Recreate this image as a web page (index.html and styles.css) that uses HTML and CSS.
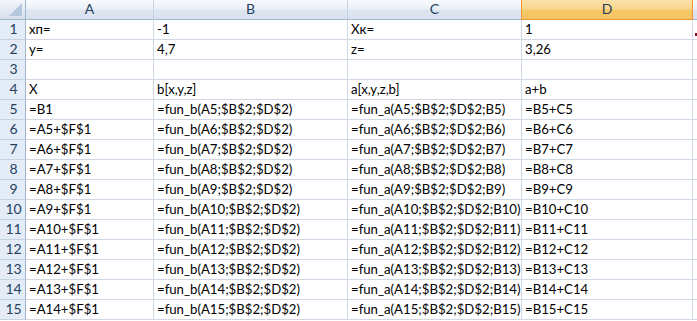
FILE: index.html
```html
<!DOCTYPE html>
<html>
<head>
<meta charset="utf-8">
<link rel="stylesheet" href="styles.css">
</head>
<body>
<div class="sheet">
  <div class="corner"><span class="tri"></span></div>
  <div class="ch">A</div>
  <div class="ch">B</div>
  <div class="ch">C</div>
  <div class="ch sel">D</div>
  <div class="ch e"></div>

  <div class="rh">1</div><div class="c">хп=</div><div class="c">-1</div><div class="c">Xк=</div><div class="c">1</div><div class="c e"><span class="mark"></span></div>
  <div class="rh">2</div><div class="c">y=</div><div class="c">4,7</div><div class="c">z=</div><div class="c">3,26</div><div class="c e"></div>
  <div class="rh">3</div><div class="c"></div><div class="c"></div><div class="c"></div><div class="c"></div><div class="c e"></div>
  <div class="rh">4</div><div class="c">X</div><div class="c">b[x,y,z]</div><div class="c">a[x,y,z,b]</div><div class="c">a+b</div><div class="c e"></div>
  <div class="rh">5</div><div class="c">=B1</div><div class="c">=fun_b(A5;$B$2;$D$2)</div><div class="c">=fun_a(A5;$B$2;$D$2;B5)</div><div class="c">=B5+C5</div><div class="c e"></div>
  <div class="rh">6</div><div class="c">=A5+$F$1</div><div class="c">=fun_b(A6;$B$2;$D$2)</div><div class="c">=fun_a(A6;$B$2;$D$2;B6)</div><div class="c">=B6+C6</div><div class="c e"></div>
  <div class="rh">7</div><div class="c">=A6+$F$1</div><div class="c">=fun_b(A7;$B$2;$D$2)</div><div class="c">=fun_a(A7;$B$2;$D$2;B7)</div><div class="c">=B7+C7</div><div class="c e"></div>
  <div class="rh">8</div><div class="c">=A7+$F$1</div><div class="c">=fun_b(A8;$B$2;$D$2)</div><div class="c">=fun_a(A8;$B$2;$D$2;B8)</div><div class="c">=B8+C8</div><div class="c e"></div>
  <div class="rh">9</div><div class="c">=A8+$F$1</div><div class="c">=fun_b(A9;$B$2;$D$2)</div><div class="c">=fun_a(A9;$B$2;$D$2;B9)</div><div class="c">=B9+C9</div><div class="c e"></div>
  <div class="rh">10</div><div class="c">=A9+$F$1</div><div class="c">=fun_b(A10;$B$2;$D$2)</div><div class="c">=fun_a(A10;$B$2;$D$2;B10)</div><div class="c">=B10+C10</div><div class="c e"></div>
  <div class="rh">11</div><div class="c">=A10+$F$1</div><div class="c">=fun_b(A11;$B$2;$D$2)</div><div class="c">=fun_a(A11;$B$2;$D$2;B11)</div><div class="c">=B11+C11</div><div class="c e"></div>
  <div class="rh">12</div><div class="c">=A11+$F$1</div><div class="c">=fun_b(A12;$B$2;$D$2)</div><div class="c">=fun_a(A12;$B$2;$D$2;B12)</div><div class="c">=B12+C12</div><div class="c e"></div>
  <div class="rh">13</div><div class="c">=A12+$F$1</div><div class="c">=fun_b(A13;$B$2;$D$2)</div><div class="c">=fun_a(A13;$B$2;$D$2;B13)</div><div class="c">=B13+C13</div><div class="c e"></div>
  <div class="rh">14</div><div class="c">=A13+$F$1</div><div class="c">=fun_b(A14;$B$2;$D$2)</div><div class="c">=fun_a(A14;$B$2;$D$2;B14)</div><div class="c">=B14+C14</div><div class="c e"></div>
  <div class="rh">15</div><div class="c">=A14+$F$1</div><div class="c">=fun_b(A15;$B$2;$D$2)</div><div class="c">=fun_a(A15;$B$2;$D$2;B15)</div><div class="c">=B15+C15</div><div class="c e"></div>
</div>
</body>
</html>
```
FILE: styles.css
```css
html, body {
  margin: 0;
  padding: 0;
  background: #ffffff;
  overflow: hidden;
}
.sheet {
  display: grid;
  grid-template-columns: 26px 128px 194px 174px 171px 20px;
  grid-auto-rows: 20px;
  width: 713px;
  font-family: Lato, "Liberation Sans", sans-serif;
  font-size: 13.2px;
  color: #000;
  position: relative;
}
.sheet > div {
  box-sizing: border-box;
}
.corner {
  background: linear-gradient(#f3f6fb, #d5dfec);
  border-right: 1px solid #9eb6ce;
  border-bottom: 1px solid #9eb6ce;
  position: relative;
}
.tri {
  position: absolute;
  right: 3px;
  bottom: 3px;
  width: 0;
  height: 0;
  border-left: 13px solid transparent;
  border-bottom: 13px solid #b5c7dd;
}
.ch {
  background: linear-gradient(#f8fafd 0%, #ebf0f7 45%, #dde5f0 55%, #d8e1ee 100%);
  border-right: 1px solid #c5d2e2;
  border-bottom: 1px solid #9eb6ce;
  color: #27415f;
  display: flex;
  align-items: flex-end;
  justify-content: center;
  padding-bottom: 2px;
  font-size: 14px;
}
.ch.sel {
  background: linear-gradient(#fbe0a8 0%, #f9d78f 45%, #f7c866 55%, #f5c367 100%);
  border-right: 1px solid #f29536;
  border-left: 1px solid #f29536;
  margin-left: -1px;
  border-bottom: 1px solid #f29536;
  color: #1f3a5c;
}
.rh {
  background: #e4ecf7;
  border-right: 1px solid #9eb6ce;
  border-bottom: 1px solid #c5d2e2;
  color: #27415f;
  display: flex;
  align-items: flex-end;
  justify-content: center;
  padding-bottom: 2px;
  padding-left: 2px;
  font-size: 14px;
}
.c {
  border-right: 1px solid #d0d7e5;
  border-bottom: 1px solid #d0d7e5;
  display: flex;
  align-items: flex-end;
  padding: 0 0 2px 3px;
  white-space: nowrap;
  overflow: hidden;
  position: relative;
}
.c.e {
  overflow: visible;
}
.mark {
  position: absolute;
  left: 2px;
  top: 13px;
  width: 3px;
  height: 3px;
  background: #7a1020;
}
```
